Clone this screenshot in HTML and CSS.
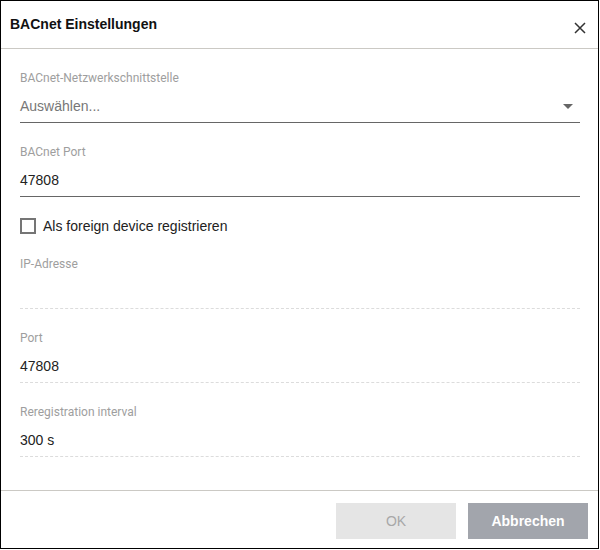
FILE: index.html
```html
<!DOCTYPE html>
<html lang="de">
<head>
<meta charset="utf-8">
<title>BACnet Einstellungen</title>
<link rel="stylesheet" href="styles.css">
</head>
<body>
<div class="dialog">
  <div class="header">
    <div class="title">BACnet Einstellungen</div>
    <button class="close" aria-label="Schließen">
      <svg width="12" height="12" viewBox="0 0 12 12"><path d="M1 1L11 11M11 1L1 11" stroke="#333" stroke-width="1.5" fill="none"/></svg>
    </button>
  </div>
  <div class="body">
    <div class="field">
      <div class="label">BACnet-Netzwerkschnittstelle</div>
      <div class="input solid select">
        <span class="placeholder">Auswählen...</span>
        <svg class="caret" width="10" height="5" viewBox="0 0 10 5"><path d="M0 0H10L5 5Z" fill="#666"/></svg>
      </div>
    </div>
    <div class="field">
      <div class="label">BACnet Port</div>
      <div class="input solid">47808</div>
    </div>
    <div class="check-row">
      <span class="checkbox"></span>
      <span class="check-label">Als foreign device registrieren</span>
    </div>
    <div class="field">
      <div class="label">IP-Adresse</div>
      <div class="input dashed"></div>
    </div>
    <div class="field">
      <div class="label">Port</div>
      <div class="input dashed">47808</div>
    </div>
    <div class="field">
      <div class="label">Reregistration interval</div>
      <div class="input dashed">300 s</div>
    </div>
  </div>
  <div class="footer">
    <button class="btn btn-ok" disabled>OK</button>
    <button class="btn btn-cancel">Abbrechen</button>
  </div>
</div>
</body>
</html>
```

FILE: styles.css
```css
* { box-sizing: border-box; }
html, body { margin: 0; padding: 0; background: #fff; }
body { font-family: "Liberation Sans", Arial, sans-serif; }

.dialog {
  width: 599px;
  height: 549px;
  border: 1px solid #000;
  display: flex;
  flex-direction: column;
  background: #fff;
}

.header {
  height: 47px;
  border-bottom: 1px solid #cbc9c4;
  display: flex;
  align-items: center;
  justify-content: space-between;
  padding: 0 12px 0 9px;
  flex: none;
  box-sizing: content-box;
}
.title {
  font-weight: bold;
  font-size: 14px;
  color: #111;
  margin-top: -2px;
}
.close {
  border: 0;
  background: none;
  padding: 0;
  width: 12px;
  height: 12px;
  margin-top: 6px;
  display: flex;
}

.body {
  flex: 1;
  padding: 0 18px 0 19px;
}

.field { padding-top: 22px; }
.label {
  font-family: Roboto, "Liberation Sans", sans-serif;
  font-size: 12px;
  line-height: 14px;
  color: #9e9e9e;
}
.input {
  font-size: 14px;
  line-height: 18px;
  height: 38px;
  padding: 12px 0 7px 0;
  color: #222;
}
.input.solid { border-bottom: 1px solid #666; }
.input.dashed { border-bottom: 1px dashed #dcdcdc; }
.select {
  display: flex;
  align-items: center;
  justify-content: space-between;
}
.placeholder { color: #777; }
.caret { margin-right: 7px; }

.check-row {
  display: flex;
  align-items: center;
  height: 38px;
  padding-top: 19px;
}
.checkbox {
  width: 16px;
  height: 16px;
  border: 2px solid #757575;
  display: inline-block;
  flex: none;
}
.check-label {
  font-size: 14px;
  color: #222;
  margin-left: 7px;
}

.footer {
  flex: none;
  border-top: 1px solid #cbc9c4;
  padding: 12px 10px 9px 0;
  display: flex;
  justify-content: flex-end;
  gap: 12px;
}
.btn {
  width: 120px;
  height: 36px;
  border: 0;
  font-family: "Liberation Sans", Arial, sans-serif;
  font-size: 14px;
}
.btn-ok {
  background: #e5e5e5;
  color: #a8a8a8;
}
.btn-cancel {
  background: #a2a5ac;
  color: #fff;
  font-weight: bold;
}
```
